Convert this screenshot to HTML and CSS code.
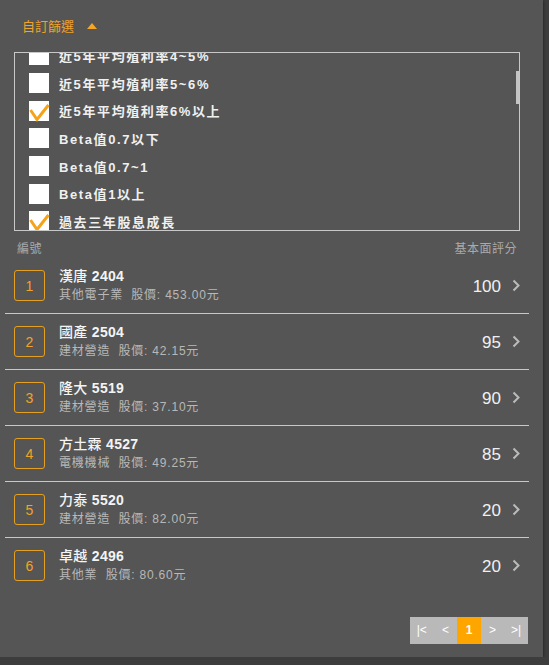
FILE: index.html
```html
<!doctype html>
<html lang="zh-TW">
<head>
    <meta charset="utf-8">
    <meta name="viewport" content="width=device-width, initial-scale=1.0">
    <title>自訂篩選</title>
    <link rel="stylesheet" href="styles.css">
</head>
<body>
<div class="panel">

    <!--  篩選條件  -->
    <div class="filterHead">
        <span class="filterTitle">自訂篩選</span>
        <span class="arrowUp"></span>
    </div>
    <div class="filterBox">
        <span class="scrollThumb"></span>
        <ul class="filterList">
            <li><span class="chk"></span>近5年平均殖利率4~5%</li>
            <li><span class="chk"></span>近5年平均殖利率5~6%</li>
            <li><span class="chk on"><svg viewBox="0 0 20 22"><polyline points="1.5,9 8,18.5 19.5,4" /></svg></span>近5年平均殖利率6%以上</li>
            <li><span class="chk"></span>Beta值0.7以下</li>
            <li><span class="chk"></span>Beta值0.7~1</li>
            <li><span class="chk"></span>Beta值1以上</li>
            <li><span class="chk on"><svg viewBox="0 0 20 22"><polyline points="1.5,9 8,18.5 19.5,4" /></svg></span>過去三年股息成長</li>
        </ul>
    </div>

    <!--  結果列表  -->
    <div class="stockList">
        <div class="listHead">
            <span>編號</span>
            <span>基本面評分</span>
        </div>
        <div class="stockRow">
            <span class="rank">1</span>
            <div class="info">
                <p class="name">漢唐 <b>2404</b></p>
                <p class="sub">其他電子業&nbsp;&nbsp;股價: 453.00元</p>
            </div>
            <span class="score">100</span>
            <svg class="more" viewBox="0 0 8 13"><polyline points="1.5,1.5 6.5,6.5 1.5,11.5" /></svg>
        </div>
        <div class="stockRow">
            <span class="rank">2</span>
            <div class="info">
                <p class="name">國產 <b>2504</b></p>
                <p class="sub">建材營造&nbsp;&nbsp;股價: 42.15元</p>
            </div>
            <span class="score">95</span>
            <svg class="more" viewBox="0 0 8 13"><polyline points="1.5,1.5 6.5,6.5 1.5,11.5" /></svg>
        </div>
        <div class="stockRow">
            <span class="rank">3</span>
            <div class="info">
                <p class="name">隆大 <b>5519</b></p>
                <p class="sub">建材營造&nbsp;&nbsp;股價: 37.10元</p>
            </div>
            <span class="score">90</span>
            <svg class="more" viewBox="0 0 8 13"><polyline points="1.5,1.5 6.5,6.5 1.5,11.5" /></svg>
        </div>
        <div class="stockRow">
            <span class="rank">4</span>
            <div class="info">
                <p class="name">方土霖 <b>4527</b></p>
                <p class="sub">電機機械&nbsp;&nbsp;股價: 49.25元</p>
            </div>
            <span class="score">85</span>
            <svg class="more" viewBox="0 0 8 13"><polyline points="1.5,1.5 6.5,6.5 1.5,11.5" /></svg>
        </div>
        <div class="stockRow">
            <span class="rank">5</span>
            <div class="info">
                <p class="name">力泰 <b>5520</b></p>
                <p class="sub">建材營造&nbsp;&nbsp;股價: 82.00元</p>
            </div>
            <span class="score">20</span>
            <svg class="more" viewBox="0 0 8 13"><polyline points="1.5,1.5 6.5,6.5 1.5,11.5" /></svg>
        </div>
        <div class="stockRow">
            <span class="rank">6</span>
            <div class="info">
                <p class="name">卓越 <b>2496</b></p>
                <p class="sub">其他業&nbsp;&nbsp;股價: 80.60元</p>
            </div>
            <span class="score">20</span>
            <svg class="more" viewBox="0 0 8 13"><polyline points="1.5,1.5 6.5,6.5 1.5,11.5" /></svg>
        </div>
    </div>

    <!--  分頁  -->
    <div class="pager">
        <span>|&lt;</span>
        <span>&lt;</span>
        <span class="cur">1</span>
        <span>&gt;</span>
        <span>&gt;|</span>
    </div>
</div>
</body>
</html>
```

FILE: styles.css
```css
* {
    margin: 0;
    padding: 0;
}

ul {
    list-style: none;
}

html, body {
    background: #3d3d3d;
    font-family: "Liberation Sans", "Noto Sans CJK TC", sans-serif;
    font-size: 12px;
}

.panel {
    width: 543px;
    height: 657px;
    background: #555555;
    box-shadow: 1px 1px 2px rgba(0, 0, 0, .3);
    overflow: hidden;
}

.filterHead {
    display: flex;
    align-items: center;
    height: 20px;
    padding: 17px 0 0 22px;
}

.filterHead .filterTitle {
    font-size: 13px;
    line-height: 20px;
    color: #f0a328;
}

.filterHead .arrowUp {
    width: 0;
    height: 0;
    margin: 0 0 2px 13px;
    border-left: 5px solid transparent;
    border-right: 5px solid transparent;
    border-bottom: 6px solid #f5a623;
}

.filterBox {
    position: relative;
    width: 504px;
    height: 177px;
    margin: 15px 0 0 14px;
    border: 1px solid #c8c8c8;
    overflow: hidden;
}

.filterBox .scrollThumb {
    position: absolute;
    top: 18px;
    right: 0;
    width: 3px;
    height: 33px;
    background: #c4c4c4;
}

.filterList {
    margin-top: -11.5px;
}

.filterList li {
    display: flex;
    align-items: center;
    height: 27.7px;
    padding-left: 14px;
    font-size: 13px;
    font-weight: bold;
    letter-spacing: 1.6px;
    color: #f0f0f0;
}

.filterList .chk {
    position: relative;
    width: 20px;
    height: 20px;
    margin-right: 10px;
    background: #fff;
    flex-shrink: 0;
}

.filterList .chk svg {
    position: absolute;
    left: 0;
    top: 0;
    width: 20px;
    height: 22px;
    overflow: visible;
}

.filterList .chk polyline {
    fill: none;
    stroke: #f5a318;
    stroke-width: 3;
}

.stockList {
    margin: 10px 14px 0 5px;
}

.listHead {
    display: flex;
    justify-content: space-between;
    height: 16px;
    padding: 0 12px;
    font-size: 12px;
    line-height: 16px;
    color: #aaaaaa;
    letter-spacing: .5px;
}

.stockRow {
    display: flex;
    align-items: center;
    height: 55px;
    padding: 0 9px;
    border-bottom: 1px solid #c8c8c8;
}

.stockList .listHead + .stockRow {
    margin-top: 1px;
}

.stockRow:last-child {
    border-bottom: none;
}

.stockRow .rank {
    display: flex;
    align-items: center;
    justify-content: center;
    width: 29px;
    height: 29px;
    border: 1.5px solid #e5a020;
    border-radius: 3px;
    color: #f0a328;
    font-size: 14px;
}

.stockRow .info {
    flex: 1;
    padding-left: 14px;
    padding-top: 1px;
}

.stockRow .name {
    font-size: 14px;
    font-weight: 500;
    line-height: 19px;
    color: #f4f4f4;
    letter-spacing: .3px;
}

.stockRow .name b {
    font-weight: bold;
}

.stockRow .sub {
    font-size: 12px;
    line-height: 19px;
    color: #b8b8b8;
    letter-spacing: .8px;
}

.stockRow .score {
    font-size: 17px;
    color: #f0f0f0;
    padding-top: 3px;
    margin-right: 11px;
}

.stockRow .more {
    width: 8px;
    height: 13px;
}

.stockRow .more polyline {
    fill: none;
    stroke: #bbbbbb;
    stroke-width: 2;
}

.pager {
    display: flex;
    width: 118px;
    height: 27px;
    margin: 24px 15px 0 auto;
    background: #b9b9b9;
}

.pager span {
    flex: 1;
    text-align: center;
    line-height: 27px;
    font-size: 12px;
    color: #fff;
}

.pager .cur {
    background: #ffa500;
    font-weight: bold;
}
```
